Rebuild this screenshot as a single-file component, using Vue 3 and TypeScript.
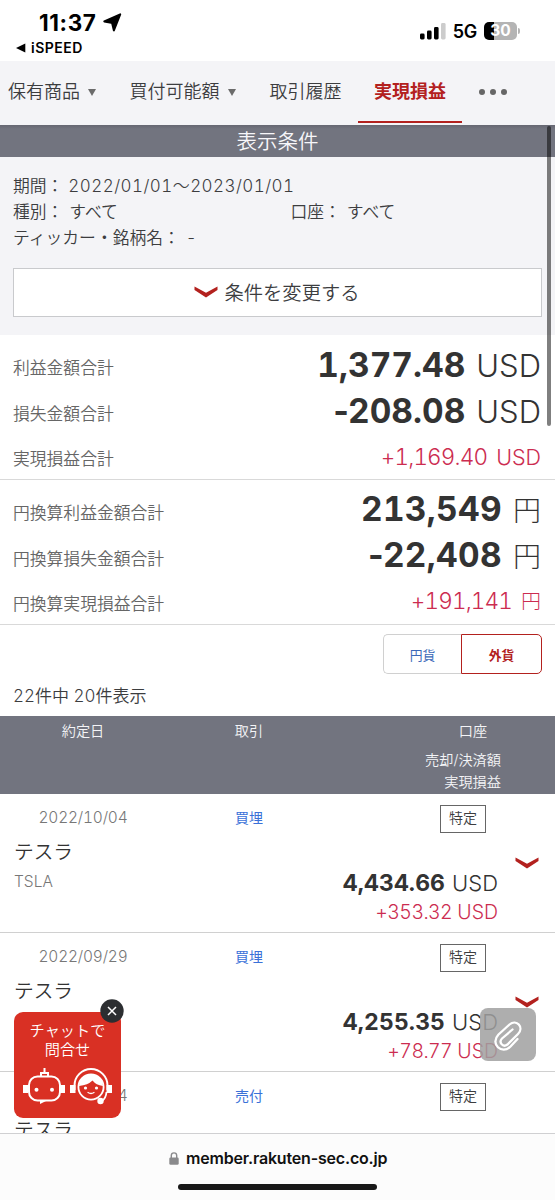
<script setup lang="ts">
interface Total {
  label: string
  sign?: string
  value: string
  unit: string
  net?: boolean
}
interface Trade {
  date: string
  side: string
  account: string
  name: string
  ticker: string
  amount: string
  profit: string
}

const totals: Total[][] = [
  [
    { label: '利益金額合計', value: '1,377.48', unit: 'USD' },
    { label: '損失金額合計', sign: '-', value: '208.08', unit: 'USD' },
    { label: '実現損益合計', value: '+1,169.40', unit: 'USD', net: true },
  ],
  [
    { label: '円換算利益金額合計', value: '213,549', unit: '円' },
    { label: '円換算損失金額合計', sign: '-', value: '22,408', unit: '円' },
    { label: '円換算実現損益合計', value: '+191,141', unit: '円', net: true },
  ],
]

const trades: Trade[] = [
  { date: '2022/10/04', side: '買埋', account: '特定', name: 'テスラ', ticker: 'TSLA', amount: '4,434.66', profit: '+353.32' },
  { date: '2022/09/29', side: '買埋', account: '特定', name: 'テスラ', ticker: '', amount: '4,255.35', profit: '+78.77' },
  { date: '2022/08/24', side: '売付', account: '特定', name: 'テスラ', ticker: '', amount: '', profit: '' },
]
</script>

<template>
  <div class="screen">
    <header class="status">
      <div class="status-left">
        <div class="clock">
          <span>11:37</span>
          <svg width="19" height="19" viewBox="0 0 19 19"><path d="M17.2 1.3 10.9 17.4 9.2 10.6Q9 9.900 8.300 9.800L1.3 8.4Z" stroke="#000" stroke-width="2" stroke-linejoin="round" /></svg>
        </div>
        <div class="back">
          <svg width="10" height="10" viewBox="0 0 10 10"><path d="M0 5 9.3.4V9.6Z" /></svg>
          <span>iSPEED</span>
        </div>
      </div>
      <div class="status-right">
        <svg class="signal" width="26" height="17" viewBox="0 0 26 17">
          <rect x="0" y="10.5" width="4.6" height="6" rx="1.4" />
          <rect x="7" y="7.5" width="4.6" height="9" rx="1.4" />
          <rect x="14" y="4" width="4.6" height="12.5" rx="1.4" />
          <rect x="21" y="0" width="4.6" height="16.5" rx="1.4" fill="#ccc" />
        </svg>
        <span class="network">5G</span>
        <div class="battery"><span>30</span></div>
        <i class="battery-tip"></i>
      </div>
    </header>

    <nav class="tabs">
      <a class="tab holdings">保有商品<i></i></a>
      <a class="tab power">買付可能額<i></i></a>
      <a class="tab history">取引履歴</a>
      <a class="tab active">実現損益</a>
      <a class="more"><b></b><b></b><b></b></a>
    </nav>

    <h1 class="heading">表示条件</h1>

    <section class="filters">
      <div class="filter">期間：<span class="period">2022/01/01<em>～</em>2023/01/01</span></div>
      <div class="filter split">
        <div>種別：<span>すべて</span></div>
        <div>口座：<span>すべて</span></div>
      </div>
      <div class="filter">ティッカー・銘柄名：<span>-</span></div>
      <button class="change">
        <svg width="24" height="12" viewBox="0 0 24 12"><path d="M.5.5 12 6.8 23.5.5V4L12 11.5.5 4Z" /></svg>
        条件を変更する
      </button>
    </section>

    <section v-for="(group, g) in totals" :key="g" class="totals">
      <div v-for="t in group" :key="t.label" class="total" :class="{ net: t.net }">
        <span class="label">{{ t.label }}</span>
        <span class="figure" :class="{ 'in-yen': t.unit === '円' }">
          <span class="value"><span v-if="t.sign" class="sign">{{ t.sign }}</span>{{ t.value }}</span>
          <span class="unit">{{ t.unit }}</span>
        </span>
      </div>
    </section>

    <div class="toggle">
      <button>円貨</button>
      <button class="on">外貨</button>
    </div>
    <div class="count">22件中 20件表示</div>

    <div class="table-head">
      <span>約定日</span>
      <span>取引</span>
      <span>口座</span>
      <div class="head-amounts">売却/決済額<br />実現損益</div>
    </div>

    <main class="trades">
      <article v-for="t in trades" :key="t.date" class="trade">
        <div class="trade-top">
          <span class="date">{{ t.date }}</span>
          <a class="side">{{ t.side }}</a>
          <span class="account">{{ t.account }}</span>
        </div>
        <div class="trade-body">
          <div>
            <div class="name">{{ t.name }}</div>
            <div class="ticker">{{ t.ticker }}</div>
          </div>
          <div v-if="t.amount" class="amounts">
            <div class="amount"><b>{{ t.amount }}</b><span>USD</span></div>
            <div class="profit"><span>{{ t.profit }}</span> USD</div>
          </div>
          <svg class="chevron" width="24" height="12" viewBox="0 0 24 12"><path d="M.5.5 12 6.8 23.5.5V4L12 11.5.5 4Z" /></svg>
        </div>
      </article>
    </main>

    <footer class="browser">
      <div class="address">
        <svg width="10" height="13" viewBox="0 0 10 13">
          <path d="M2.3 6V3.6a2.7 2.7 0 0 1 5.4 0V6" fill="none" stroke="#8a8a8c" stroke-width="1.4" />
          <rect x=".3" y="5.4" width="9.4" height="7.4" rx="1.4" fill="#8a8a8c" />
        </svg>
        <span>member.rakuten-sec.co.jp</span>
      </div>
      <div class="home-bar"></div>
    </footer>

    <div class="scrollbar"></div>

    <div class="chat">
      <div class="chat-text">チャットで<br />問合せ</div>
      <svg class="chat-icons" width="90" height="38" viewBox="0 0 90 38">
        <g fill="none" stroke="#fff" stroke-width="2">
          <rect x="6" y="8.5" width="31" height="24" rx="8.5" />
          <path d="M18 8V5h7v3M21.5 5V0" />
          <path d="M51.500 22v-4.500a16.500 16.500 0 0 1 33 0V22" />
          <circle cx="68" cy="19" r="12.600" stroke-width="1.8" />
          <path d="M83.500 24Q83 30 79 33" stroke-width="1.8" />
          <path d="M65 24.500Q68 26.500 71 24.500" stroke-width="1.3" stroke-linecap="round" />
        </g>
        <g fill="#fff">
          <rect x="0" y="17" width="5" height="8" />
          <rect x="37" y="17" width="5" height="8" />
          <circle cx="13.500" cy="21.700" r="2" />
          <circle cx="29" cy="21.700" r="2" />
          <path d="M17 32H25L17 36Z" />
          <rect x="47" y="17" width="5.500" height="8" />
          <rect x="83.500" y="17" width="5.500" height="8" />
          <path d="M56 18Q57 6.500 68 6.500T80 18Q73 17 69.500 12.500Q65 17 56 18Z" />
          <circle cx="62.500" cy="20" r="1.600" />
          <circle cx="73.500" cy="20" r="1.600" />
          <circle cx="77.500" cy="33" r="3.200" />
        </g>
      </svg>
      <svg class="chat-close" width="24" height="24" viewBox="0 0 24 24">
        <circle cx="12" cy="12" r="11.700" fill="#2c2e31" />
        <path d="M8 8 16 16M16 8 8 16" stroke="#fff" stroke-width="1.500" />
      </svg>
    </div>

    <div class="clip">
      <svg width="56" height="53" viewBox="0 0 56 53">
        <path d="M37.500 31 30.500 38.500C22 47 9.500 36 18.500 26.500L29.500 16.500C36.500 10.500 44.500 19.500 38 26L27.500 36.500C22.500 40 18.500 34 22 30.500L32.500 21.500" fill="none" stroke="#fff" stroke-width="2.300" stroke-linecap="round" stroke-linejoin="round" />
      </svg>
    </div>
  </div>
</template>

<style>
body {
  margin: 0;
  overflow: hidden;
  background: #fff;
}
</style>

<style scoped>
* {
  box-sizing: border-box;
}
.screen {
  position: relative;
  display: flex;
  flex-direction: column;
  width: 555px;
  height: 1200px;
  overflow: hidden;
  color: #3c3d3f;
  font-family: Inter, "Noto Sans CJK JP", sans-serif;
  font-weight: 350;
  font-variant-numeric: tabular-nums;
  white-space: nowrap;
}
.screen > * {
  min-height: 0;
}
button {
  font: inherit;
  color: inherit;
  padding: 0;
  background: #fff;
}
.status {
  display: flex;
  justify-content: space-between;
  flex: 0 0 61px;
  color: #000;
  font-family: Inter, sans-serif;
  font-variant-numeric: normal;
}
.status-left {
  padding: 9px 0 0 16px;
}
.clock {
  display: flex;
  align-items: center;
  gap: 6px;
  height: 27px;
  padding-left: 23px;
  font-size: 22.500px;
  font-weight: 700;
  letter-spacing: 0.600px;
}
.back {
  display: flex;
  align-items: center;
  gap: 5px;
  height: 23px;
  font-size: 14px;
  font-weight: 600;
  letter-spacing: 0.500px;
}
.status-right {
  display: flex;
  align-items: center;
  height: 62px;
  padding-right: 35px;
}
.network {
  margin: 1px 0 0 7px;
  font-size: 18px;
  font-weight: 600;
  letter-spacing: -0.3px;
}
.battery {
  width: 33px;
  height: 18px;
  margin-left: 7px;
  border-radius: 5px;
  background: linear-gradient(90deg, #000 10px, #b4b4b4 10px);
  color: #fff;
  font-size: 15.5px;
  font-weight: 700;
  line-height: 18px;
  text-align: center;
}
.battery-tip {
  width: 2px;
  height: 6px;
  margin-left: 1px;
  border-radius: 0 2px 2px 0;
  background: #b4b4b4;
}
.tabs {
  display: flex;
  flex: 0 0 63.500px;
  padding-left: 8px;
  background: #f4f4f7;
  font-size: 18px;
  line-height: 62px;
}
.tab {
  height: 62px;
}
.tab i {
  display: inline-block;
  margin: 0 0 2px 8px;
  border: 4px solid transparent;
  border-top: 7px solid #6b6b6b;
  border-bottom: 0;
}
.holdings {
  width: 121.500px;
}
.power {
  width: 140px;
}
.history {
  width: 88.500px;
}
.active {
  width: 104px;
  border-bottom: 2.500px solid #b3211e;
  color: #b3211e;
  font-weight: 700;
  text-align: center;
}
.more {
  display: flex;
  align-items: center;
  gap: 5px;
  height: 62px;
  margin-left: 17px;
}
.more b {
  width: 6px;
  height: 6px;
  border-radius: 50%;
  background: #666;
}
.heading {
  flex: 0 0 32.500px;
  margin: 0;
  background: linear-gradient(#666772, #72747f 4px);
  color: #f7f7fa;
  font-size: 20.500px;
  font-weight: 350;
  line-height: 34px;
  text-align: center;
}
.filters {
  flex: 0 0 178px;
  padding: 16px 13px 0;
  background: #f4f4f7;
  font-size: 16.800px;
}
.filter {
  height: 26px;
  line-height: 26px;
}
.filter span {
  margin-left: 6px;
}
.filter .period {
  margin-left: 5px;
  font-size: 17px;
  font-weight: 300;
  letter-spacing: 0.450px;
}
.period em {
  font-style: normal;
}
.split {
  display: grid;
  grid-template-columns: 277.500px 1fr;
}
.change {
  display: flex;
  align-items: center;
  justify-content: center;
  gap: 7px;
  width: 529px;
  height: 49px;
  margin-top: 17px;
  padding: 0 2px 1px 0;
  border: 1px solid #c9cacd;
  font-size: 19.300px;
  fill: #b3211e;
}
.totals {
  flex: 0 0 145px;
  padding: 11px 14px 0 13px;
  border-bottom: 1.500px solid #d9d9d9;
}
.total {
  display: flex;
  align-items: center;
  justify-content: space-between;
  height: 45.500px;
  line-height: 45.500px;
}
.label {
  color: #666;
  font-size: 16.800px;
}
.figure {
  display: flex;
  align-items: baseline;
  gap: 11px;
  margin-bottom: 6px;
}
.value {
  color: #333;
  font-size: 33.500px;
  font-weight: 700;
}
.in-yen .value {
  letter-spacing: 0.300px;
}
.sign {
  margin-right: -1px;
  font-variant-numeric: normal;
}
.unit {
  color: #333;
  font-size: 31px;
  font-weight: 300;
}
.in-yen .unit {
  font-size: 28px;
}
.net .figure {
  gap: 9px;
}
.net .value,
.net .unit {
  color: #cc2c50;
  font-size: 22.500px;
  font-weight: 300;
}
.net .value {
  letter-spacing: -0.850px;
}
.net .unit {
  font-size: 21.500px;
}
.net .in-yen .unit {
  font-size: 20px;
}
.toggle {
  display: flex;
  flex: 0 0 40px;
  align-self: flex-end;
  margin: 9px 13px 0 0;
  font-size: 12.800px;
}
.toggle button {
  width: 78px;
  border: 1px solid #d0d0d0;
  border-right: 0;
  border-radius: 5px 0 0 5px;
  color: #3a68b8;
  font-weight: 400;
}
.toggle .on {
  width: 81px;
  border: 1.500px solid #b3211e;
  border-radius: 0 5px 5px 0;
  color: #b3211e;
  font-weight: 700;
}
.count {
  flex: 0 0 42px;
  padding-left: 13px;
  font-size: 17px;
  line-height: 45px;
}
.table-head {
  display: grid;
  grid-template-columns: 166px 166px 1fr;
  grid-template-rows: 33px 1fr;
  flex: 0 0 78px;
  background: #72747f;
  color: #f4f4f7;
  font-size: 14.200px;
  line-height: 30px;
  text-align: center;
}
.table-head span:nth-child(3) {
  padding-left: 59px;
}
.head-amounts {
  grid-column: 3;
  padding-right: 54px;
  line-height: 22px;
  text-align: right;
}
.trades {
  flex: 0 0 338.500px;
  overflow: hidden;
}
.trade {
  height: 139px;
  border-bottom: 1.500px solid #d0d0d0;
}
.trade:nth-child(3) .chevron {
  visibility: hidden;
}
.trade-top {
  display: grid;
  grid-template-columns: 166px 166px 108px 46px;
  height: 46px;
  line-height: 47px;
  font-size: 14px;
  text-align: center;
}
.date {
  color: #777;
  font-size: 15.500px;
  font-weight: 300;
  letter-spacing: -0.200px;
}
.side {
  color: #3a71d8;
  font-weight: 400;
}
.account {
  grid-column: 4;
  align-self: center;
  height: 28px;
  margin-top: 3px;
  border: 1.500px solid #666;
  line-height: 24px;
}
.trade-body {
  position: relative;
  display: flex;
  justify-content: space-between;
  padding: 0 57px 0 14px;
}
.name {
  height: 26px;
  color: #333;
  font-size: 19.700px;
  line-height: 24px;
}
.ticker {
  color: #777;
  font-size: 15.500px;
  font-weight: 300;
  line-height: 32px;
}
.amounts {
  padding-top: 27px;
  font-weight: 300;
  text-align: right;
}
.amount {
  height: 30px;
  color: #333;
  font-size: 22px;
  line-height: 32px;
}
.amount b {
  margin-right: 7px;
  font-size: 23px;
  font-weight: 700;
  letter-spacing: 0.100px;
}
.profit {
  color: #cc2c50;
  font-size: 19.500px;
  line-height: 30px;
}
.profit span {
  letter-spacing: -0.600px;
}
.chevron {
  position: absolute;
  top: 17px;
  left: 515px;
  fill: #b3211e;
}
.browser {
  flex: 1;
  border-top: 1px solid #d0d0d2;
  background: #fcfcfc;
}
.address {
  display: flex;
  align-items: center;
  gap: 7px;
  height: 49px;
  padding-left: 169px;
  color: #111;
  font-size: 16px;
  font-variant-numeric: normal;
  font-weight: 600;
  letter-spacing: -0.180px;
}
.home-bar {
  width: 199px;
  height: 6px;
  margin: 1px 0 0 178px;
  border-radius: 3px;
  background: #181818;
}
.scrollbar {
  position: absolute;
  top: 126px;
  left: 547px;
  width: 4px;
  height: 300px;
  border-radius: 2px;
  background: rgba(0, 0, 0, 0.5);
}
.chat {
  position: absolute;
  top: 1012px;
  left: 14px;
  width: 107px;
  height: 106px;
  border-radius: 9px;
  background: #d93024;
  color: #fff;
  font-size: 15.200px;
  line-height: 19px;
  text-align: center;
}
.chat-text {
  padding-top: 9px;
}
.chat-icons {
  position: absolute;
  top: 56px;
  left: 9px;
}
.chat-close {
  position: absolute;
  top: -13px;
  left: 86px;
}
.clip {
  position: absolute;
  top: 1008px;
  left: 480px;
  width: 56px;
  height: 53px;
  border-radius: 8px;
  background: rgba(160, 160, 160, 0.85);
}
</style>
